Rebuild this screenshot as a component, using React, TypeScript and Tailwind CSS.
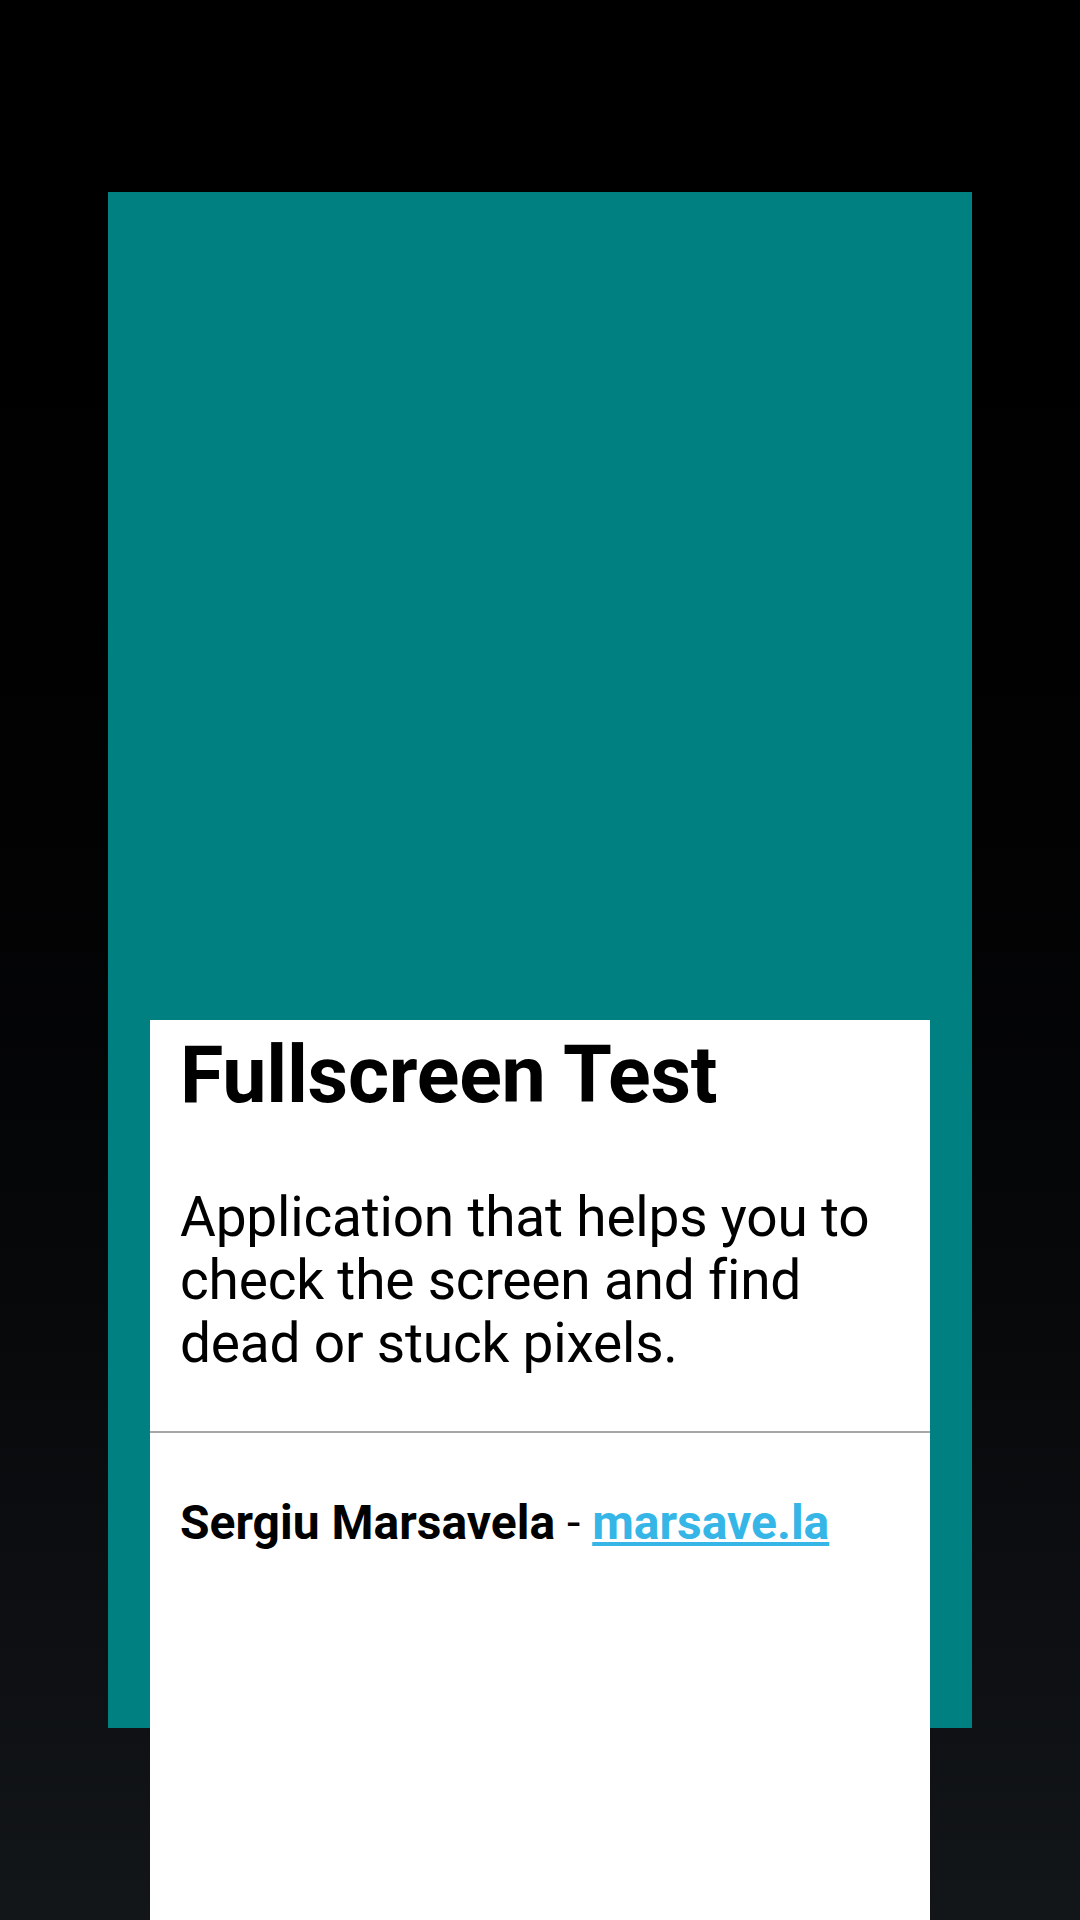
export default function App() {
  return (
    <div className="w-[1080px] h-[1920px] overflow-hidden bg-linear-to-b from-[#000000] to-[#131619] pt-[192px] px-[108px]" style={{ fontFamily: "Roboto, 'Noto Sans', sans-serif" }}>
      <div className="h-[1536px] bg-[#008080] pt-[828px] px-[42px]">
        <div className="h-[900px] bg-white flex flex-col">
          <div className="pl-[30px] pt-[16px]">
            <h1 className="text-[79px] leading-[79px] font-bold text-black whitespace-nowrap tracking-[-0.25px]">Fullscreen Test</h1>
          </div>
          <p className="pl-[30px] pr-[20px] mt-[71px] text-[55px] leading-[63px] text-black tracking-[-0.2px]">
            Application that helps you to check the screen and find dead or stuck pixels.
          </p>
          <div className="mt-[56px] h-[2px] bg-[#a6a6a6]" />
          <div className="pl-[30px] mt-[66px] text-[48px] leading-[48px] text-black whitespace-nowrap">
            <span className="font-bold">Sergiu Marsavela</span> - <a href="#" className="font-bold text-[#35b6e6] underline">marsave.la</a>
          </div>
        </div>
      </div>
    </div>
  );
}
